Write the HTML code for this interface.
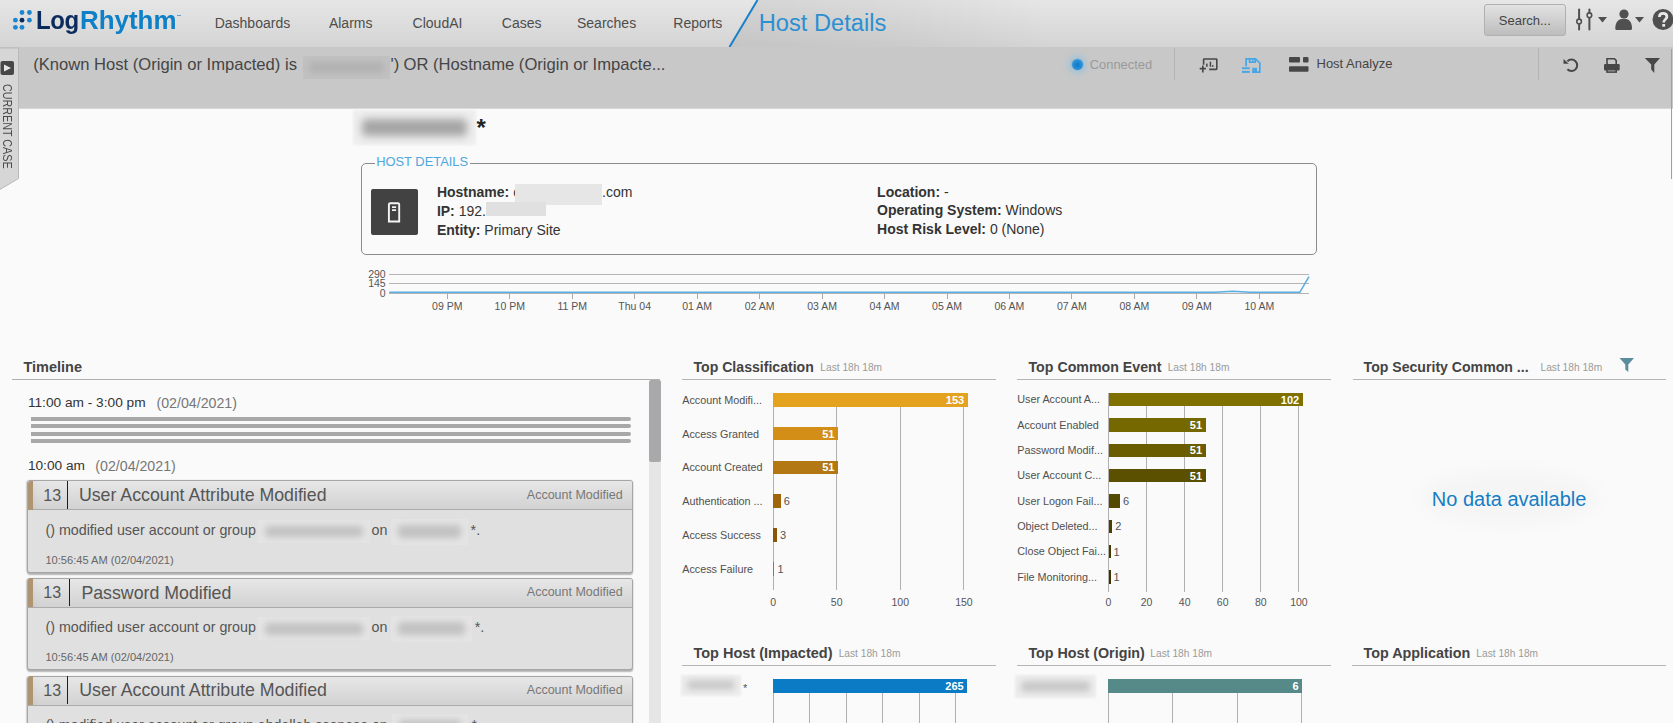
<!DOCTYPE html>
<html><head><meta charset="utf-8"><style>
html,body{margin:0;padding:0;width:1673px;height:723px;overflow:hidden;background:#fafafa;font-family:"Liberation Sans",sans-serif;}
.t{position:absolute;line-height:1;white-space:nowrap;}
.r{position:absolute;}
svg{position:absolute;overflow:visible;}
</style></head><body>
<div class="r" style="left:0.0px;top:0.0px;width:1673.0px;height:47.0px;background:linear-gradient(#e6e6e6,#d4d4d4);"></div>
<svg style="left:0;top:0" width="40" height="40"><circle cx="22" cy="12.5" r="2.4" fill="#1d86d0"/><circle cx="29.4" cy="12.5" r="2.4" fill="#1d86d0"/><circle cx="15.4" cy="20.2" r="2.4" fill="#1d86d0"/><circle cx="22" cy="20.2" r="2.4" fill="#0c2b5a"/><circle cx="29.4" cy="20.2" r="2.4" fill="#1d86d0"/><circle cx="15.4" cy="27.3" r="2.4" fill="#1d86d0"/><circle cx="22" cy="27.3" r="2.4" fill="#1d86d0"/></svg>
<div class="t" style="left:35.5px;top:7.07px;font-size:26.5px;color:#0b2b5c;font-weight:bold;transform:scaleX(0.905);transform-origin:0 0;letter-spacing:-0.5px;">Log</div>
<div class="t" style="left:80.3px;top:7.07px;font-size:26.5px;color:#0e80c8;font-weight:bold;transform:scaleX(0.978);transform-origin:0 0;">Rhythm</div>
<div class="r" style="left:177.0px;top:14.5px;width:4.0px;height:1.5px;background:#5aa0d0;"></div>
<div class="t" style="left:214.7px;top:16.25px;font-size:14px;color:#4d4d4d;">Dashboards</div>
<div class="t" style="left:328.9px;top:16.25px;font-size:14px;color:#4d4d4d;">Alarms</div>
<div class="t" style="left:412.6px;top:16.25px;font-size:14px;color:#4d4d4d;">CloudAI</div>
<div class="t" style="left:501.8px;top:16.25px;font-size:14px;color:#4d4d4d;">Cases</div>
<div class="t" style="left:577.0px;top:16.25px;font-size:14px;color:#4d4d4d;">Searches</div>
<div class="t" style="left:673.3px;top:16.25px;font-size:14px;color:#4d4d4d;">Reports</div>
<div class="r" style="left:729px;top:0;width:320px;height:47px;background:linear-gradient(to right,rgba(0,0,0,0.075),rgba(0,0,0,0.05) 45%,rgba(0,0,0,0));clip-path:polygon(28.5px 0,320px 0,320px 47px,0.5px 47px);"></div>
<svg style="left:0;top:0" width="1673" height="47"><line x1="729.5" y1="47" x2="757.5" y2="0" stroke="#1a80c8" stroke-width="2"/></svg>
<div class="t" style="left:758.8px;top:11.58px;font-size:23.65px;color:#2b8fd2;">Host Details</div>
<div class="r" style="left:1484.3px;top:4.2px;width:81.3px;height:31.4px;background:linear-gradient(#e2e2e2,#bdbdbd);border:1px solid #b0b0b0;border-radius:3px;box-sizing:border-box;"></div>
<div class="t" style="left:1498.8px;top:14.10px;font-size:13px;color:#444;">Search...</div>
<svg style="left:1570px;top:5px" width="100" height="30">
<g fill="#505050" stroke="#505050">
<line x1="9.1" y1="4.6" x2="9.1" y2="24.4" stroke-width="2" stroke-linecap="round"/>
<circle cx="9.1" cy="16.4" r="2.3" fill="#e6e6e6" stroke-width="1.6"/>
<line x1="19.4" y1="4.6" x2="19.4" y2="24.4" stroke-width="2" stroke-linecap="round"/>
<circle cx="19.4" cy="10.2" r="2.3" fill="#e6e6e6" stroke-width="1.6"/>
<path d="M28 12 L37 12 L32.5 17.5 Z" stroke="none"/>
<circle cx="54" cy="9" r="4.6" stroke="none"/>
<path d="M45.3 23.5 C45.3 17 48.5 13.8 53.8 13.8 C59.1 13.8 62 17 62 23.5 Q62 25 60.5 25 L46.8 25 Q45.3 25 45.3 23.5 Z" stroke="none"/>
<path d="M65 12 L74 12 L69.5 17.5 Z" stroke="none"/>
<circle cx="93" cy="14.5" r="10.5" stroke="none"/>
</g>
<path d="M89.4 12 C89.4 9.5 91.1 8.4 93.1 8.4 C95.3 8.4 96.9 9.7 96.9 11.7 C96.9 14.2 93.7 14.6 93.7 17.4" fill="none" stroke="#e8e8e8" stroke-width="2.7"/><rect x="92.3" y="19" width="2.8" height="2.7" fill="#e8e8e8"/>
</svg>
<div class="r" style="left:0.0px;top:47.0px;width:1673.0px;height:61.3px;background:#c8c8c8;"></div>
<div class="r" style="left:0.0px;top:108.0px;width:1673.0px;height:1.0px;background:#d8d8d8;"></div>
<svg style="left:0;top:47px" width="20" height="145"><path d="M-1 1 L18.5 1 L18.5 131.5 L-1 143 Z" fill="#d6d6d6" stroke="#b9b9b9" stroke-width="1"/><rect x="0.5" y="14" width="13.5" height="14" rx="2" fill="#474747"/><path d="M4 17.5 L11 21 L4 24.5 Z" fill="#e6e6e6"/></svg>
<div class="t" style="left:1.2px;top:83.5px;font-size:12px;color:#4a4a4a;writing-mode:vertical-rl;transform:scaleY(0.896);transform-origin:0 0;">CURRENT CASE</div>
<div class="t" style="left:33.2px;top:56.85px;font-size:16.6px;color:#454545;">(Known Host (Origin or Impacted) is</div>
<div class="r" style="left:302.5px;top:56.0px;width:87.2px;height:22.5px;background:#c1c1c1;"></div>
<div class="r" style="left:308.5px;top:61.6px;width:75.2px;height:11.2px;background:#b2b2b2;filter:blur(3px);border-radius:4px;"></div>
<div class="t" style="left:390.5px;top:56.85px;font-size:16.6px;color:#454545;">')</div>
<div class="t" style="left:403.6px;top:56.85px;font-size:16.6px;color:#454545;">OR (Hostname (Origin or Impacte...</div>
<div class="r" style="left:1071.6px;top:58.5px;width:11.6px;height:11.6px;border-radius:50%;background:radial-gradient(circle at 50% 55%,#0a7ac8 0%,#2a92dc 60%,#5cb2ea 100%);box-shadow:0 0 0 0.6px rgba(150,150,150,0.6),0 0 6px 3px rgba(120,190,235,0.6);"></div>
<div class="t" style="left:1089.8px;top:58.68px;font-size:12.9px;color:#9a9a9a;">Connected</div>
<div class="r" style="left:1174.0px;top:48.4px;width:1.0px;height:31.4px;background:#b3b3b3;"></div>
<div class="r" style="left:1538.0px;top:48.2px;width:1.0px;height:31.5px;background:#b3b3b3;"></div>
<svg style="left:1190px;top:50px" width="130" height="30">
<g fill="none" stroke="#474747" stroke-width="1.6" stroke-linecap="butt">
<path d="M13.6 14.8 L13.6 9.6 Q13.6 9 14.2 9 L26.2 9 Q26.8 9 26.8 9.6 L26.8 18.8 Q26.8 19.4 26.2 19.4 L19.2 19.4"/>
<path d="M9.7 18.6 L15.9 18.6 M12.8 15.6 L12.8 22.5"/>
</g>
<g fill="#474747"><rect x="16.1" y="13.6" width="1.5" height="3.2"/><rect x="19.7" y="11.7" width="1.5" height="5.1"/><rect x="22" y="15.2" width="1.5" height="1.6"/></g>
<g fill="none" stroke="#46a6e6" stroke-width="1.7">
<path d="M56.1 16.2 L56.1 8.9 L65.5 8.9 L69.8 13 L69.8 22.2 L62 22.2"/>
<path d="M59.6 9 L59.6 12.1 L65.2 12.1 L65.2 9"/>
</g>
<g fill="#46a6e6">
<rect x="52" y="17.3" width="7.8" height="1.8"/><rect x="52" y="20.9" width="7.8" height="2"/>
<rect x="62.3" y="17.8" width="4.7" height="4.4"/>
<rect x="62" y="9.4" width="1.4" height="1.8"/>
</g>
<g fill="#474747">
<rect x="99" y="7.1" width="11" height="5.5" rx="1"/><rect x="113" y="7.1" width="5.5" height="5.5" rx="1"/>
<rect x="99" y="16.2" width="19.5" height="5.6" rx="1"/>
</g>
</svg>
<div class="t" style="left:1316.5px;top:57.30px;font-size:13px;color:#454545;">Host Analyze</div>
<svg style="left:1555px;top:54px" width="118" height="24">
<path d="M12.4 15.3 A5.7 5.7 0 1 0 12.4 7.3" fill="none" stroke="#474747" stroke-width="2"/>
<path d="M8.5 5 L8.5 9.8 L13.8 9.8 Z" fill="#474747"/>
<g fill="none" stroke="#474747" stroke-width="1.6">
<path d="M52 11 L52 4.8 L59.5 4.8 L61.2 6.6 L61.2 11"/>
<rect x="52" y="14.8" width="9.2" height="3.3"/>
</g>
<g fill="#474747">
<path d="M49 11.2 Q49 10.1 50.1 10.1 L63.6 10.1 Q64.7 10.1 64.7 11.2 L64.7 15.6 Q64.7 16.4 63.9 16.4 L49.8 16.4 Q49 16.4 49 15.6 Z"/>
<path d="M89.8 4 L105 4 L99.3 10.5 L99.3 19 L96.2 15.6 L96.2 10.5 Z"/>
</g>
</svg>
<div class="r" style="left:1670.5px;top:48.5px;width:1.0px;height:130.9px;background:#a0a0a0;"></div>
<div class="r" style="left:353.2px;top:110.4px;width:123.3px;height:34.3px;background:#efefef;filter:blur(1.2px);"></div>
<div class="r" style="left:362.2px;top:118.6px;width:105.3px;height:17.8px;background:#a4a4a4;filter:blur(4px);border-radius:4px;"></div>
<div class="t" style="left:476.5px;top:115.88px;font-size:24px;color:#222;font-weight:bold;">*</div>
<div class="r" style="left:361.2px;top:163.3px;width:955.5px;height:91.9px;background:transparent;border:1px solid #8c8c8c;border-radius:5px;box-sizing:border-box;"></div>
<div class="r" style="left:374.5px;top:158.0px;width:95.0px;height:10.0px;background:#fafafa;"></div>
<div class="t" style="left:376.2px;top:156.28px;font-size:12.9px;color:#4ea7de;">HOST DETAILS</div>
<div class="r" style="left:371.0px;top:189.0px;width:47.0px;height:45.7px;background:#424242;border-radius:2px;"></div>
<svg style="left:371px;top:189px" width="47" height="46"><path d="M17.9 32.5 L17.9 15.6 Q17.9 14.3 19.2 14.3 L26.9 14.3 Q28.2 14.3 28.2 15.6 L28.2 32.5 Z" fill="none" stroke="#f5f5f5" stroke-width="1.9"/><rect x="21" y="17.3" width="4.1" height="1.7" fill="#f5f5f5"/><rect x="21" y="20.3" width="4.1" height="1.7" fill="#f5f5f5"/></svg>
<div class="t" style="left:436.9px;top:184.95px;font-size:14px;color:#333;"><b>Hostname:</b> c</div>
<div class="r" style="left:515.0px;top:184.0px;width:87.0px;height:20.7px;background:#e6e6e6;"></div>
<div class="t" style="left:602.0px;top:184.95px;font-size:14px;color:#333;">.com</div>
<div class="t" style="left:436.9px;top:204.25px;font-size:14px;color:#333;"><b>IP:</b> 192.</div>
<div class="r" style="left:485.5px;top:202.0px;width:60.7px;height:14.0px;background:#e0e0e0;"></div>
<div class="t" style="left:436.9px;top:222.85px;font-size:14px;color:#333;"><b>Entity:</b> Primary Site</div>
<div class="t" style="left:877.1px;top:184.85px;font-size:14px;color:#333;"><b>Location:</b> -</div>
<div class="t" style="left:877.1px;top:203.25px;font-size:14px;color:#333;"><b>Operating System:</b> Windows</div>
<div class="t" style="left:877.1px;top:222.35px;font-size:14px;color:#333;"><b>Host Risk Level:</b> 0 (None)</div>
<div class="r" style="left:389.2px;top:274.0px;width:919.8px;height:1.0px;background:#b5b5b5;"></div>
<div class="r" style="left:389.2px;top:283.0px;width:919.8px;height:1.0px;background:#b5b5b5;"></div>
<div class="r" style="left:389.2px;top:292.5px;width:919.8px;height:1.0px;background:#b5b5b5;"></div>
<div class="t" style="right:1287.3px;top:268.91px;font-size:10.5px;color:#555;">290</div>
<div class="t" style="right:1287.3px;top:278.01px;font-size:10.5px;color:#555;">145</div>
<div class="t" style="right:1287.3px;top:287.91px;font-size:10.5px;color:#555;">0</div>
<div class="r" style="left:446.8px;top:293.0px;width:1.0px;height:5.7px;background:#aaa;"></div>
<div class="t" style="left:347.3px;width:200px;text-align:center;top:300.81px;font-size:10.5px;color:#555;">09 PM</div>
<div class="r" style="left:509.3px;top:293.0px;width:1.0px;height:5.7px;background:#aaa;"></div>
<div class="t" style="left:409.8px;width:200px;text-align:center;top:300.81px;font-size:10.5px;color:#555;">10 PM</div>
<div class="r" style="left:571.7px;top:293.0px;width:1.0px;height:5.7px;background:#aaa;"></div>
<div class="t" style="left:472.2px;width:200px;text-align:center;top:300.81px;font-size:10.5px;color:#555;">11 PM</div>
<div class="r" style="left:634.2px;top:293.0px;width:1.0px;height:5.7px;background:#aaa;"></div>
<div class="t" style="left:534.7px;width:200px;text-align:center;top:300.81px;font-size:10.5px;color:#555;">Thu 04</div>
<div class="r" style="left:696.6px;top:293.0px;width:1.0px;height:5.7px;background:#aaa;"></div>
<div class="t" style="left:597.1px;width:200px;text-align:center;top:300.81px;font-size:10.5px;color:#555;">01 AM</div>
<div class="r" style="left:759.1px;top:293.0px;width:1.0px;height:5.7px;background:#aaa;"></div>
<div class="t" style="left:659.6px;width:200px;text-align:center;top:300.81px;font-size:10.5px;color:#555;">02 AM</div>
<div class="r" style="left:821.6px;top:293.0px;width:1.0px;height:5.7px;background:#aaa;"></div>
<div class="t" style="left:722.1px;width:200px;text-align:center;top:300.81px;font-size:10.5px;color:#555;">03 AM</div>
<div class="r" style="left:884.0px;top:293.0px;width:1.0px;height:5.7px;background:#aaa;"></div>
<div class="t" style="left:784.5px;width:200px;text-align:center;top:300.81px;font-size:10.5px;color:#555;">04 AM</div>
<div class="r" style="left:946.5px;top:293.0px;width:1.0px;height:5.7px;background:#aaa;"></div>
<div class="t" style="left:847.0px;width:200px;text-align:center;top:300.81px;font-size:10.5px;color:#555;">05 AM</div>
<div class="r" style="left:1008.9px;top:293.0px;width:1.0px;height:5.7px;background:#aaa;"></div>
<div class="t" style="left:909.4px;width:200px;text-align:center;top:300.81px;font-size:10.5px;color:#555;">06 AM</div>
<div class="r" style="left:1071.4px;top:293.0px;width:1.0px;height:5.7px;background:#aaa;"></div>
<div class="t" style="left:971.9px;width:200px;text-align:center;top:300.81px;font-size:10.5px;color:#555;">07 AM</div>
<div class="r" style="left:1133.9px;top:293.0px;width:1.0px;height:5.7px;background:#aaa;"></div>
<div class="t" style="left:1034.4px;width:200px;text-align:center;top:300.81px;font-size:10.5px;color:#555;">08 AM</div>
<div class="r" style="left:1196.3px;top:293.0px;width:1.0px;height:5.7px;background:#aaa;"></div>
<div class="t" style="left:1096.8px;width:200px;text-align:center;top:300.81px;font-size:10.5px;color:#555;">09 AM</div>
<div class="r" style="left:1258.8px;top:293.0px;width:1.0px;height:5.7px;background:#aaa;"></div>
<div class="t" style="left:1159.3px;width:200px;text-align:center;top:300.81px;font-size:10.5px;color:#555;">10 AM</div>
<svg style="left:0;top:0" width="1673" height="320"><path d="M389.2 292.3 L1215 292.3 L1233 291.3 L1250 292.3 L1299.8 292.3 L1309 276.7" fill="none" stroke="#5aaee2" stroke-width="1.6"/></svg>
<div class="t" style="left:23.4px;top:359.63px;font-size:14.5px;color:#444;font-weight:bold;">Timeline</div>
<div class="r" style="left:12.2px;top:379.0px;width:648.2px;height:1.0px;background:#b0b0b0;"></div>
<div class="t" style="left:27.9px;top:396.30px;font-size:13.7px;color:#333;">11:00 am - 3:00 pm</div>
<div class="t" style="left:156.5px;top:395.88px;font-size:14.2px;color:#777;">(02/04/2021)</div>
<div class="r" style="left:31.1px;top:417.1px;width:599.6px;height:3.8px;background:#a8a8a8;border-radius:0 2px 2px 0;"></div>
<div class="r" style="left:31.1px;top:424.1px;width:599.6px;height:3.8px;background:#a8a8a8;border-radius:0 2px 2px 0;"></div>
<div class="r" style="left:31.1px;top:432.0px;width:599.6px;height:3.8px;background:#a8a8a8;border-radius:0 2px 2px 0;"></div>
<div class="r" style="left:31.1px;top:439.0px;width:599.6px;height:3.8px;background:#a8a8a8;border-radius:0 2px 2px 0;"></div>
<div class="t" style="left:27.9px;top:459.30px;font-size:13.7px;color:#333;">10:00 am</div>
<div class="t" style="left:95.3px;top:458.88px;font-size:14.2px;color:#777;">(02/04/2021)</div>
<div class="r" style="left:649.4px;top:461.0px;width:11.3px;height:262.0px;background:#e6e6e6;"></div>
<div class="r" style="left:649.4px;top:380.0px;width:11.3px;height:81.5px;background:#a9a8aa;border-radius:2px;"></div>
<div class="r" style="left:27.4px;top:480.4px;width:605.9px;height:92.8px;background:#e0e0e0;border:1px solid #a6a6a6;border-radius:3px;box-sizing:border-box;box-shadow:0 1.5px 1.5px rgba(0,0,0,0.28),-0.5px 0 1.5px rgba(0,0,0,0.12);"></div>
<div class="r" style="left:28.4px;top:481.4px;width:603.9px;height:29.1px;background:linear-gradient(to right,rgba(0,0,0,0.05),rgba(0,0,0,0) 14px),linear-gradient(#e7e7e7,#d2d2d2);border-radius:2px 2px 0 0;border-bottom:1px solid #ababab;box-sizing:border-box;"></div>
<div class="r" style="left:27.7px;top:481.0px;width:5.2px;height:29.2px;background:#ae9470;border-radius:3px 0 0 0;"></div>
<div class="t" style="left:43.3px;top:487.66px;font-size:16px;color:#555;">13</div>
<div class="r" style="left:66.5px;top:481.3px;width:1.5px;height:27.7px;background:#1e1e1e;"></div>
<div class="t" style="left:78.9px;top:487.27px;font-size:17.76px;color:#555;">User Account Attribute Modified</div>
<div class="t" style="right:1050.3px;top:488.52px;font-size:12.5px;color:#777;">Account Modified</div>
<div class="t" style="left:45.4px;top:522.60px;font-size:14.3px;color:#555;">() modified user account or group</div>
<div class="r" style="left:258.1px;top:520.0px;width:111.5px;height:22.9px;background:#e4e4e4;"></div>
<div class="r" style="left:265.1px;top:525.7px;width:97.5px;height:11.4px;background:#c2c2c2;filter:blur(3px);border-radius:4px;"></div>
<div class="t" style="left:371.5px;top:523.10px;font-size:14.3px;color:#555;">on</div>
<div class="r" style="left:390.6px;top:518.5px;width:77.2px;height:26.0px;background:#e4e4e4;"></div>
<div class="r" style="left:397.6px;top:525.0px;width:63.2px;height:13.0px;background:#c2c2c2;filter:blur(3px);border-radius:4px;"></div>
<div class="t" style="left:470.6px;top:523.10px;font-size:14.3px;color:#555;">*.</div>
<div class="t" style="left:45.4px;top:555.10px;font-size:11.1px;color:#666;">10:56:45 AM (02/04/2021)</div>
<div class="r" style="left:27.4px;top:577.7px;width:605.9px;height:92.8px;background:#e0e0e0;border:1px solid #a6a6a6;border-radius:3px;box-sizing:border-box;box-shadow:0 1.5px 1.5px rgba(0,0,0,0.28),-0.5px 0 1.5px rgba(0,0,0,0.12);"></div>
<div class="r" style="left:28.4px;top:578.7px;width:603.9px;height:29.1px;background:linear-gradient(to right,rgba(0,0,0,0.05),rgba(0,0,0,0) 14px),linear-gradient(#e7e7e7,#d2d2d2);border-radius:2px 2px 0 0;border-bottom:1px solid #ababab;box-sizing:border-box;"></div>
<div class="r" style="left:27.7px;top:578.3px;width:5.2px;height:29.2px;background:#ae9470;border-radius:3px 0 0 0;"></div>
<div class="t" style="left:43.3px;top:584.96px;font-size:16px;color:#555;">13</div>
<div class="r" style="left:68.6px;top:578.6px;width:1.5px;height:27.7px;background:#1e1e1e;"></div>
<div class="t" style="left:81.4px;top:584.57px;font-size:17.76px;color:#555;">Password Modified</div>
<div class="t" style="right:1050.3px;top:585.82px;font-size:12.5px;color:#777;">Account Modified</div>
<div class="t" style="left:45.4px;top:619.90px;font-size:14.3px;color:#555;">() modified user account or group</div>
<div class="r" style="left:258.1px;top:617.3px;width:111.5px;height:22.9px;background:#e4e4e4;"></div>
<div class="r" style="left:265.1px;top:623.0px;width:97.5px;height:11.5px;background:#c2c2c2;filter:blur(3px);border-radius:4px;"></div>
<div class="t" style="left:371.5px;top:620.40px;font-size:14.3px;color:#555;">on</div>
<div class="r" style="left:390.6px;top:615.8px;width:81.4px;height:26.0px;background:#e4e4e4;"></div>
<div class="r" style="left:397.6px;top:622.3px;width:67.4px;height:13.0px;background:#c2c2c2;filter:blur(3px);border-radius:4px;"></div>
<div class="t" style="left:474.8px;top:620.40px;font-size:14.3px;color:#555;">*.</div>
<div class="t" style="left:45.4px;top:652.40px;font-size:11.1px;color:#666;">10:56:45 AM (02/04/2021)</div>
<div class="r" style="left:27.4px;top:675.5px;width:605.9px;height:92.8px;background:#e0e0e0;border:1px solid #a6a6a6;border-radius:3px;box-sizing:border-box;box-shadow:0 1.5px 1.5px rgba(0,0,0,0.28),-0.5px 0 1.5px rgba(0,0,0,0.12);"></div>
<div class="r" style="left:28.4px;top:676.5px;width:603.9px;height:29.1px;background:linear-gradient(to right,rgba(0,0,0,0.05),rgba(0,0,0,0) 14px),linear-gradient(#e7e7e7,#d2d2d2);border-radius:2px 2px 0 0;border-bottom:1px solid #ababab;box-sizing:border-box;"></div>
<div class="r" style="left:27.7px;top:676.1px;width:5.2px;height:29.2px;background:#ae9470;border-radius:3px 0 0 0;"></div>
<div class="t" style="left:43.3px;top:682.76px;font-size:16px;color:#555;">13</div>
<div class="r" style="left:66.9px;top:676.4px;width:1.5px;height:27.7px;background:#1e1e1e;"></div>
<div class="t" style="left:79.3px;top:682.37px;font-size:17.76px;color:#555;">User Account Attribute Modified</div>
<div class="t" style="right:1050.3px;top:683.62px;font-size:12.5px;color:#777;">Account Modified</div>
<div class="t" style="left:45.4px;top:717.81px;font-size:14.17px;color:#555;">() modified user account or group abdallah.ssenese on</div>
<div class="r" style="left:392.0px;top:713.6px;width:76.0px;height:26.0px;background:#e4e4e4;"></div>
<div class="r" style="left:399.0px;top:720.1px;width:62.0px;height:13.0px;background:#c2c2c2;filter:blur(3px);border-radius:4px;"></div>
<div class="t" style="left:471.5px;top:718.20px;font-size:14.3px;color:#555;">*.</div>
<div class="t" style="left:45.4px;top:750.20px;font-size:11.1px;color:#666;">10:56:45 AM (02/04/2021)</div>
<div class="t" style="left:693.5px;top:360.06px;font-size:14.1px;color:#444;font-weight:bold;">Top Classification</div>
<div class="t" style="left:820.3px;top:363.37px;font-size:10.2px;color:#9a9a9a;">Last 18h 18m</div>
<div class="r" style="left:682.2px;top:379.0px;width:313.7px;height:1.0px;background:#b5b5b5;"></div>
<div class="t" style="left:1028.5px;top:359.98px;font-size:14.2px;color:#444;font-weight:bold;">Top Common Event</div>
<div class="t" style="left:1167.7px;top:363.37px;font-size:10.2px;color:#9a9a9a;">Last 18h 18m</div>
<div class="r" style="left:1017.2px;top:379.0px;width:313.7px;height:1.0px;background:#b5b5b5;"></div>
<div class="t" style="left:1363.6px;top:360.06px;font-size:14.1px;color:#444;font-weight:bold;">Top Security Common ...</div>
<div class="t" style="left:1540.5px;top:363.37px;font-size:10.2px;color:#9a9a9a;">Last 18h 18m</div>
<div class="r" style="left:1352.8px;top:379.0px;width:313.2px;height:1.0px;background:#b5b5b5;"></div>
<svg style="left:1619px;top:357px" width="16" height="16"><path d="M0.5 1 L15 1 L9.3 7.5 L9.3 15 L6.3 12.5 L6.3 7.5 Z" fill="#5b8d9d"/></svg>
<div class="r" style="left:1420.0px;top:470.0px;width:180.0px;height:55.0px;background:rgba(0,0,0,0.018);border-radius:50%;filter:blur(8px);"></div>
<div class="t" style="left:1431.8px;top:488.87px;font-size:20px;color:#167dc4;">No data available</div>
<div class="t" style="left:693.4px;top:645.73px;font-size:14.5px;color:#444;font-weight:bold;">Top Host (Impacted)</div>
<div class="t" style="left:838.7px;top:649.37px;font-size:10.2px;color:#9a9a9a;">Last 18h 18m</div>
<div class="r" style="left:682.2px;top:665.0px;width:314.0px;height:1.0px;background:#b5b5b5;"></div>
<div class="t" style="left:1028.4px;top:645.90px;font-size:14.3px;color:#444;font-weight:bold;">Top Host (Origin)</div>
<div class="t" style="left:1150.3px;top:649.37px;font-size:10.2px;color:#9a9a9a;">Last 18h 18m</div>
<div class="r" style="left:1017.2px;top:665.0px;width:314.0px;height:1.0px;background:#b5b5b5;"></div>
<div class="t" style="left:1363.5px;top:645.85px;font-size:14.35px;color:#444;font-weight:bold;">Top Application</div>
<div class="t" style="left:1476.3px;top:649.37px;font-size:10.2px;color:#9a9a9a;">Last 18h 18m</div>
<div class="r" style="left:1352.0px;top:665.0px;width:313.8px;height:1.0px;background:#b5b5b5;"></div>
<div class="r" style="left:772.6px;top:393.0px;width:1.0px;height:196.8px;background:#b0b0b0;"></div>
<div class="t" style="left:673.1px;width:200px;text-align:center;top:597.01px;font-size:10.5px;color:#555;">0</div>
<div class="r" style="left:836.2px;top:393.0px;width:1.0px;height:196.8px;background:#b0b0b0;"></div>
<div class="t" style="left:736.7px;width:200px;text-align:center;top:597.01px;font-size:10.5px;color:#555;">50</div>
<div class="r" style="left:899.8px;top:393.0px;width:1.0px;height:196.8px;background:#b0b0b0;"></div>
<div class="t" style="left:800.3px;width:200px;text-align:center;top:597.01px;font-size:10.5px;color:#555;">100</div>
<div class="r" style="left:963.4px;top:393.0px;width:1.0px;height:196.8px;background:#b0b0b0;"></div>
<div class="t" style="left:863.9px;width:200px;text-align:center;top:597.01px;font-size:10.5px;color:#555;">150</div>
<div class="t" style="left:682.2px;top:394.86px;font-size:10.8px;color:#505050;">Account Modifi...</div>
<div class="r" style="left:773.1px;top:393.1px;width:194.6px;height:13.6px;background:#e5a21e;"></div>
<div class="t" style="right:708.8px;top:394.79px;font-size:11px;color:#fff;font-weight:bold;">153</div>
<div class="t" style="left:682.2px;top:428.64px;font-size:10.8px;color:#505050;">Access Granted</div>
<div class="r" style="left:773.1px;top:426.9px;width:64.9px;height:13.6px;background:#d28e17;"></div>
<div class="t" style="right:838.5px;top:428.57px;font-size:11px;color:#fff;font-weight:bold;">51</div>
<div class="t" style="left:682.2px;top:462.42px;font-size:10.8px;color:#505050;">Account Created</div>
<div class="r" style="left:773.1px;top:460.7px;width:64.9px;height:13.6px;background:#b37813;"></div>
<div class="t" style="right:838.5px;top:462.35px;font-size:11px;color:#fff;font-weight:bold;">51</div>
<div class="t" style="left:682.2px;top:496.20px;font-size:10.8px;color:#505050;">Authentication ...</div>
<div class="r" style="left:773.1px;top:494.4px;width:7.6px;height:13.6px;background:#a0640b;"></div>
<div class="t" style="left:783.7px;top:496.13px;font-size:11px;color:#555;">6</div>
<div class="t" style="left:682.2px;top:529.98px;font-size:10.8px;color:#505050;">Access Success</div>
<div class="r" style="left:773.1px;top:528.2px;width:3.8px;height:13.6px;background:#8b5507;"></div>
<div class="t" style="left:779.9px;top:529.91px;font-size:11px;color:#555;">3</div>
<div class="t" style="left:682.2px;top:563.76px;font-size:10.8px;color:#505050;">Access Failure</div>
<div class="r" style="left:773.1px;top:562.0px;width:1.3px;height:13.6px;background:#a4732f;"></div>
<div class="t" style="left:777.4px;top:563.69px;font-size:11px;color:#555;">1</div>
<div class="r" style="left:1108.0px;top:393.0px;width:1.0px;height:198.8px;background:#b0b0b0;"></div>
<div class="t" style="left:1008.5px;width:200px;text-align:center;top:596.91px;font-size:10.5px;color:#555;">0</div>
<div class="r" style="left:1146.1px;top:393.0px;width:1.0px;height:198.8px;background:#b0b0b0;"></div>
<div class="t" style="left:1046.6px;width:200px;text-align:center;top:596.91px;font-size:10.5px;color:#555;">20</div>
<div class="r" style="left:1184.2px;top:393.0px;width:1.0px;height:198.8px;background:#b0b0b0;"></div>
<div class="t" style="left:1084.7px;width:200px;text-align:center;top:596.91px;font-size:10.5px;color:#555;">40</div>
<div class="r" style="left:1222.2px;top:393.0px;width:1.0px;height:198.8px;background:#b0b0b0;"></div>
<div class="t" style="left:1122.7px;width:200px;text-align:center;top:596.91px;font-size:10.5px;color:#555;">60</div>
<div class="r" style="left:1260.3px;top:393.0px;width:1.0px;height:198.8px;background:#b0b0b0;"></div>
<div class="t" style="left:1160.8px;width:200px;text-align:center;top:596.91px;font-size:10.5px;color:#555;">80</div>
<div class="r" style="left:1298.4px;top:393.0px;width:1.0px;height:198.8px;background:#b0b0b0;"></div>
<div class="t" style="left:1198.9px;width:200px;text-align:center;top:596.91px;font-size:10.5px;color:#555;">100</div>
<div class="t" style="left:1017.2px;top:394.46px;font-size:10.8px;color:#505050;">User Account A...</div>
<div class="r" style="left:1108.5px;top:393.1px;width:194.2px;height:13.2px;background:#7f7000;"></div>
<div class="t" style="right:373.8px;top:394.59px;font-size:11px;color:#fff;font-weight:bold;">102</div>
<div class="t" style="left:1017.2px;top:419.79px;font-size:10.8px;color:#505050;">Account Enabled</div>
<div class="r" style="left:1108.5px;top:418.4px;width:97.1px;height:13.2px;background:#766800;"></div>
<div class="t" style="right:470.9px;top:419.92px;font-size:11px;color:#fff;font-weight:bold;">51</div>
<div class="t" style="left:1017.2px;top:445.12px;font-size:10.8px;color:#505050;">Password Modif...</div>
<div class="r" style="left:1108.5px;top:443.8px;width:97.1px;height:13.2px;background:#6a5d00;"></div>
<div class="t" style="right:470.9px;top:445.25px;font-size:11px;color:#fff;font-weight:bold;">51</div>
<div class="t" style="left:1017.2px;top:470.45px;font-size:10.8px;color:#505050;">User Account C...</div>
<div class="r" style="left:1108.5px;top:469.1px;width:97.1px;height:13.2px;background:#5b5000;"></div>
<div class="t" style="right:470.9px;top:470.58px;font-size:11px;color:#fff;font-weight:bold;">51</div>
<div class="t" style="left:1017.2px;top:495.78px;font-size:10.8px;color:#505050;">User Logon Fail...</div>
<div class="r" style="left:1108.5px;top:494.4px;width:11.4px;height:13.2px;background:#534900;"></div>
<div class="t" style="left:1122.9px;top:495.91px;font-size:11px;color:#555;">6</div>
<div class="t" style="left:1017.2px;top:521.11px;font-size:10.8px;color:#505050;">Object Deleted...</div>
<div class="r" style="left:1108.5px;top:519.8px;width:3.8px;height:13.2px;background:#4a4100;"></div>
<div class="t" style="left:1115.3px;top:521.24px;font-size:11px;color:#555;">2</div>
<div class="t" style="left:1017.2px;top:546.44px;font-size:10.8px;color:#505050;">Close Object Fai...</div>
<div class="r" style="left:1108.5px;top:545.1px;width:2.0px;height:13.2px;background:#433a00;"></div>
<div class="t" style="left:1113.5px;top:546.57px;font-size:11px;color:#555;">1</div>
<div class="t" style="left:1017.2px;top:571.77px;font-size:10.8px;color:#505050;">File Monitoring...</div>
<div class="r" style="left:1108.5px;top:570.4px;width:2.0px;height:13.2px;background:#3b3300;"></div>
<div class="t" style="left:1113.5px;top:571.90px;font-size:11px;color:#555;">1</div>
<div class="r" style="left:772.8px;top:679.0px;width:1.0px;height:44.0px;background:#b0b0b0;"></div>
<div class="r" style="left:808.9px;top:679.0px;width:1.0px;height:44.0px;background:#b0b0b0;"></div>
<div class="r" style="left:845.9px;top:679.0px;width:1.0px;height:44.0px;background:#b0b0b0;"></div>
<div class="r" style="left:882.1px;top:679.0px;width:1.0px;height:44.0px;background:#b0b0b0;"></div>
<div class="r" style="left:919.1px;top:679.0px;width:1.0px;height:44.0px;background:#b0b0b0;"></div>
<div class="r" style="left:955.1px;top:679.0px;width:1.0px;height:44.0px;background:#b0b0b0;"></div>
<div class="r" style="left:773.3px;top:679.1px;width:193.9px;height:13.8px;background:#0a7bc4;"></div>
<div class="t" style="right:709.3px;top:680.99px;font-size:11px;color:#fff;font-weight:bold;">265</div>
<div class="r" style="left:681.2px;top:675.2px;width:59.5px;height:20.4px;background:#ededed;filter:blur(1px);"></div>
<div class="r" style="left:687.2px;top:680.3px;width:47.5px;height:10.2px;background:#cacaca;filter:blur(3px);border-radius:4px;"></div>
<div class="t" style="left:743.0px;top:682.69px;font-size:11px;color:#555;">*</div>
<div class="r" style="left:1107.8px;top:679.0px;width:1.0px;height:44.0px;background:#b0b0b0;"></div>
<div class="r" style="left:1172.2px;top:679.0px;width:1.0px;height:44.0px;background:#b0b0b0;"></div>
<div class="r" style="left:1236.8px;top:679.0px;width:1.0px;height:44.0px;background:#b0b0b0;"></div>
<div class="r" style="left:1301.0px;top:679.0px;width:1.0px;height:44.0px;background:#b0b0b0;"></div>
<div class="r" style="left:1108.3px;top:679.1px;width:193.4px;height:13.8px;background:#558a88;"></div>
<div class="t" style="right:374.5px;top:680.99px;font-size:11px;color:#fff;font-weight:bold;">6</div>
<div class="r" style="left:1015.2px;top:674.6px;width:80.7px;height:23.4px;background:#ededed;filter:blur(1px);"></div>
<div class="r" style="left:1021.2px;top:680.5px;width:68.7px;height:11.7px;background:#c8c8c8;filter:blur(3px);border-radius:4px;"></div>
</body></html>
